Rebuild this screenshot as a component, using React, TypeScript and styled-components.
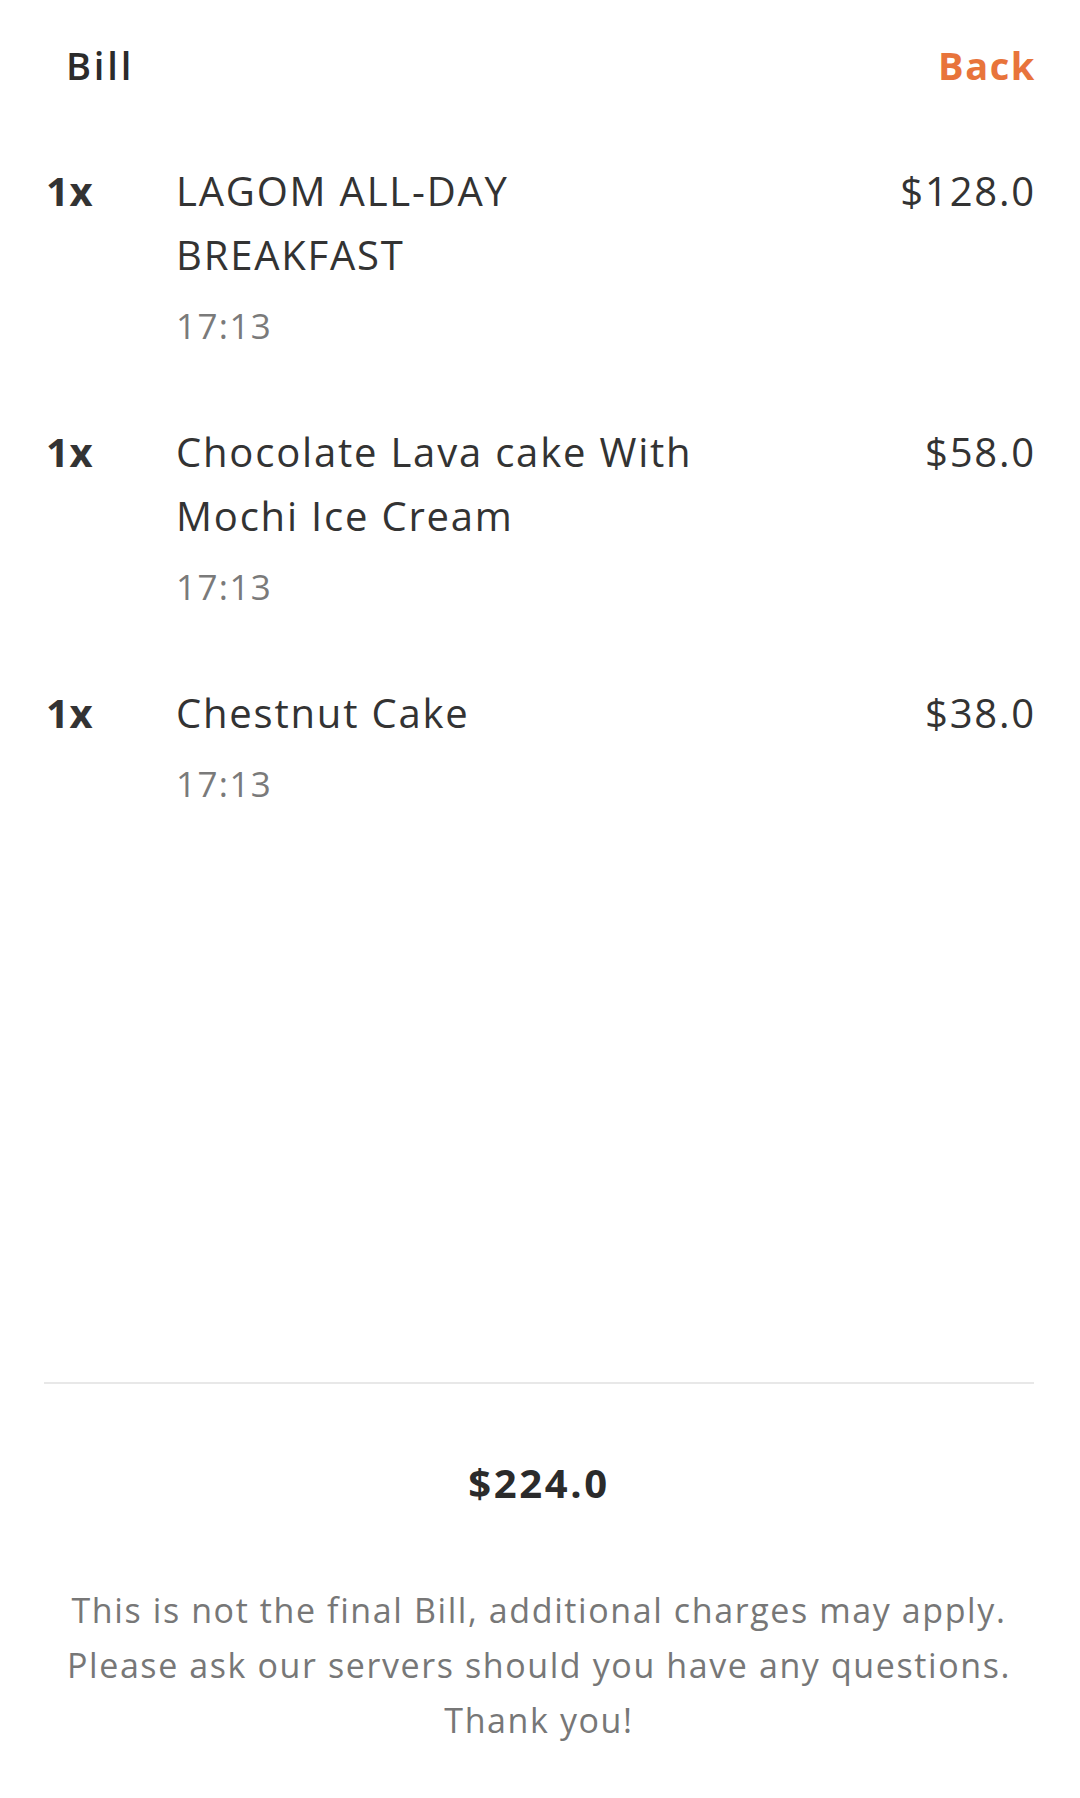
import styled, { createGlobalStyle } from 'styled-components';

const GlobalStyle = createGlobalStyle`
  html, body {
    margin: 0;
    padding: 0;
    background: #fff;
  }
  body {
    font-family: 'Open Sans', 'Noto Sans', sans-serif;
    color: #333;
  }
`;

type BillItem = { qty: number; name: string; time: string; price: string };

const items: BillItem[] = [
  { qty: 1, name: 'LAGOM ALL-DAY BREAKFAST', time: '17:13', price: '$128.0' },
  { qty: 1, name: 'Chocolate Lava cake With Mochi Ice Cream', time: '17:13', price: '$58.0' },
  { qty: 1, name: 'Chestnut Cake', time: '17:13', price: '$38.0' },
];

const Page = styled.div`
  display: flex;
  flex-direction: column;
  min-height: 1798px;
  box-sizing: border-box;
  padding: 0 46px 50px 44px;
`;

const Header = styled.div`
  display: flex;
  justify-content: space-between;
  align-items: center;
  padding: 40px 0 0 22px;
  height: 50px;
`;

const Title = styled.div`
  font-size: 38px;
  font-weight: 600;
  letter-spacing: 2.8px;
  color: #2b2b2b;
`;

const BackLink = styled.a`
  margin-right: -2px;
  font-size: 38px;
  font-weight: 700;
  letter-spacing: 1.6px;
  color: #e8743b;
  text-decoration: none;
  cursor: pointer;
`;

const List = styled.div`
  flex: 1;
  display: flex;
  flex-direction: column;
  gap: 68px;
  padding-top: 69px;
`;

const Row = styled.div`
  display: flex;
  align-items: flex-start;
  padding-left: 2px;
  letter-spacing: 1.8px;
`;

const Qty = styled.div`
  width: 130px;
  flex-shrink: 0;
  font-size: 40px;
  line-height: 64px;
  font-weight: 700;
  letter-spacing: 0.5px;
  color: #333;
`;

const Info = styled.div`
  width: 560px;
  display: flex;
  flex-direction: column;
`;

const Name = styled.div`
  font-size: 40px;
  line-height: 64px;
  color: #333;
`;

const Time = styled.div`
  margin-top: 13px;
  font-size: 35px;
  line-height: 52px;
  letter-spacing: 1.4px;
  color: #7a7a7a;
`;

const Price = styled.div`
  margin-left: auto;
  margin-right: -2px;
  font-size: 40px;
  line-height: 64px;
  color: #333;
`;

const Footer = styled.div`
  display: flex;
  flex-direction: column;
  align-items: center;
`;

const Divider = styled.hr`
  width: 100%;
  height: 2px;
  margin: 0;
  border: none;
  background: #e8e8e8;
`;

const Total = styled.div`
  margin-top: 71px;
  font-size: 40px;
  line-height: 56px;
  font-weight: 700;
  letter-spacing: 2.6px;
  color: #2b2b2b;
`;

const Note = styled.p`
  margin: 72px 0 0;
  text-align: center;
  font-size: 34px;
  line-height: 55px;
  letter-spacing: 1.6px;
  color: #777;
`;

export default function App() {
  return (
    <>
      <GlobalStyle />
      <Page>
        <Header>
          <Title>Bill</Title>
          <BackLink>Back</BackLink>
        </Header>
        <List>
          {items.map((item, i) => (
            <Row key={i}>
              <Qty>{item.qty}x</Qty>
              <Info>
                <Name>{item.name}</Name>
                <Time>{item.time}</Time>
              </Info>
              <Price>{item.price}</Price>
            </Row>
          ))}
        </List>
        <Footer>
          <Divider />
          <Total>$224.0</Total>
          <Note>
            This is not the final Bill, additional charges may apply.
            <br />
            Please ask our servers should you have any questions.
            <br />
            Thank you!
          </Note>
        </Footer>
      </Page>
    </>
  );
}
